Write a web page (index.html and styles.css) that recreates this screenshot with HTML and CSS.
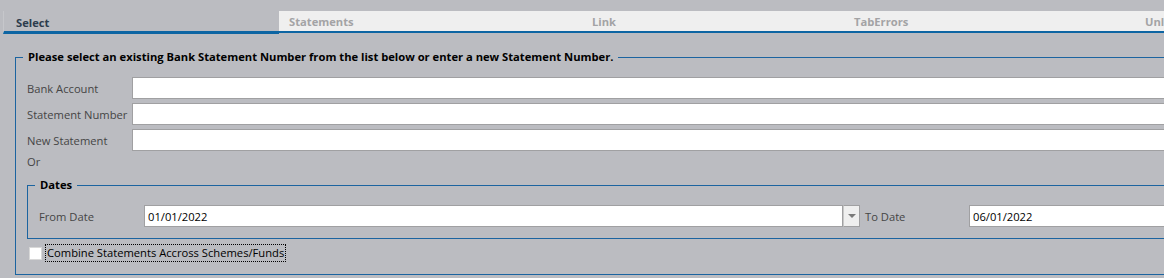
FILE: index.html
```html
<!DOCTYPE html>
<html lang="en">
<head>
    <meta charset="UTF-8">
    <title>Bank Statement</title>
    <link rel="stylesheet" href="styles.css">
</head>
<body>

    <!-- Zakladki -->
    <div class="tabs">
        <div class="tab tab-active" style="width: 263px;">Select</div>
        <div class="tab" style="width: 293px;">Statements</div>
        <div class="tab" style="width: 252px;">Link</div>
        <div class="tab" style="width: 281px;">TabErrors</div>
        <div class="tab" style="width: 100px;">Unlink</div>
    </div>

    <fieldset class="group">
        <legend>Please select an existing Bank Statement Number from the list below or enter a new Statement Number.</legend>

        <div class="row">
            <label class="label">Bank Account</label>
            <input class="field" type="text">
        </div>
        <div class="row">
            <label class="label">Statement Number</label>
            <input class="field" type="text">
        </div>
        <div class="row">
            <label class="label">New Statement</label>
            <input class="field" type="text">
        </div>
        <div class="or">Or</div>

        <fieldset class="group inner">
            <legend>Dates</legend>
            <div class="row">
                <label class="label">From Date</label>
                <div class="combo">
                    <input class="field" type="text" value="01/01/2022">
                    <span class="combo-btn"></span>
                </div>
                <label class="label label-to">To Date</label>
                <input class="field" type="text" value="06/01/2022">
            </div>
        </fieldset>

        <div class="check-row">
            <span class="check"></span>
            <span class="check-label">Combine Statements Accross Schemes/Funds</span>
        </div>
    </fieldset>

</body>
</html>
```

FILE: styles.css
```css
 body {
     background-color: #bbbcc1;
     margin: 0;
     overflow: hidden;
     font-family: "Open Sans", "Noto Sans", sans-serif;
     font-size: 11.2px;
     color: #454545;
 }

 /* Pasek zakladek */
 .tabs {
     display: flex;
     align-items: flex-start;
     padding-top: 11px;
     padding-left: 3px;
     white-space: nowrap;
 }

 .tab {
     flex: none;
     height: 20px;
     line-height: 21px;
     padding-left: 10px;
     font-weight: bold;
     color: #a3a3a5;
     background-color: #efefef;
     border-bottom: 2px solid #0d65a3;
     overflow: hidden;
 }

 .tab-active {
     padding-left: 12px;
     color: #2d3c4d;
     background-color: #bbbcc1;
     border-left: 1px solid #c6c7cb;
     border-bottom: 3px solid #0d65a3;
     line-height: 23px;
 }

 /* Ramki grup */
 .group {
     margin: 15px -40px 0 15px;
     padding: 12px 0 12px 11px;
     border: 1px solid #1b64a0;
     min-width: 0;
 }

 .group legend {
     margin-left: -4px;
     padding: 0 5px;
     font-weight: bold;
     color: #000;
     line-height: 16px;
 }

 .inner {
     margin: 7px 0 0 0;
     padding: 12px 0 11px 11px;
 }

 .row {
     display: flex;
     align-items: center;
     height: 22px;
     margin-bottom: 4px;
     white-space: nowrap;
 }

 .inner .row {
     margin-bottom: 0;
 }

 .label {
     flex: none;
     width: 105px;
 }

 .label-to {
     width: 104px;
 }

 .field {
     flex: 1;
     min-width: 0;
     height: 22px;
     box-sizing: border-box;
     margin: 0;
     padding: 0 3px;
     border: 1px solid #a0a0a2;
     background: #fff;
     font-family: inherit;
     font-size: 11.2px;
     color: #000;
 }

 .or {
     line-height: 16px;
     margin-top: -1px;
 }

 /* Lista z data */
 .combo {
     flex: none;
     display: flex;
     width: 716px;
     margin-right: 5px;
 }

 .combo-btn {
     flex: none;
     width: 15px;
     height: 20px;
     border: 1px solid #a0a0a2;
     border-left: 1px solid #c8c8c8;
     background: #efefef;
     position: relative;
 }

 .combo-btn::after {
     content: '';
     position: absolute;
     left: 4px;
     top: 8px;
     border-left: 4px solid transparent;
     border-right: 4px solid transparent;
     border-top: 4px solid #7a7a7a;
 }

 /* Pole wyboru */
 .check-row {
     display: flex;
     align-items: center;
     margin-top: 5px;
     height: 18px;
 }

 .check {
     width: 11px;
     height: 11px;
     margin-left: 2px;
     margin-right: 3px;
     background: #fff;
     border: 1px solid #d8d8d8;
 }

 .check-label {
     color: #000;
     padding: 0 1px;
     line-height: 16px;
     border: 1px dotted #000;
 }
```
